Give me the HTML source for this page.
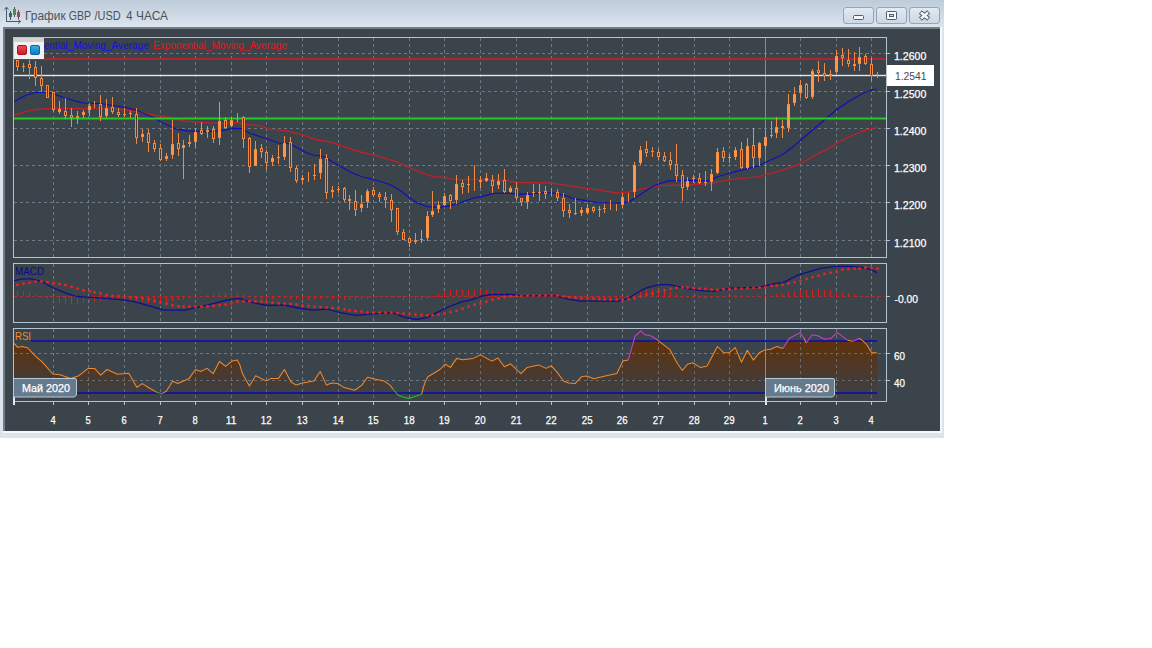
<!DOCTYPE html>
<html><head><meta charset="utf-8"><title>График GBP /USD 4 ЧАСА</title>
<style>html,body{margin:0;padding:0;background:#fff;}body{width:1152px;height:648px;position:relative;overflow:hidden;font-family:"Liberation Sans",sans-serif;}</style>
</head><body>
<svg width="944" height="438" viewBox="0 0 944 438" style="position:absolute;left:0;top:0">
<defs>
<linearGradient id="tb" gradientUnits="userSpaceOnUse" x1="0" y1="0" x2="0" y2="27"><stop offset="0" stop-color="#becbd9"/><stop offset="1" stop-color="#dbe5f0"/></linearGradient>
<linearGradient id="btn" x1="0" y1="0" x2="0" y2="1"><stop offset="0" stop-color="#e3ebf2"/><stop offset="0.5" stop-color="#d6e0ea"/><stop offset="1" stop-color="#ccd8e3"/></linearGradient>
<linearGradient id="rsig" gradientUnits="userSpaceOnUse" x1="0" y1="341" x2="0" y2="400"><stop offset="0" stop-color="#5f320b"/><stop offset="0.6" stop-color="#483a31"/><stop offset="1" stop-color="#3b434b"/></linearGradient>
<linearGradient id="rb" x1="0" y1="0" x2="0" y2="1"><stop offset="0" stop-color="#f05058"/><stop offset="1" stop-color="#c81828"/></linearGradient>
<linearGradient id="bb" x1="0" y1="0" x2="0" y2="1"><stop offset="0" stop-color="#38b0e8"/><stop offset="1" stop-color="#1078c0"/></linearGradient>
<linearGradient id="mb" x1="0" y1="0" x2="0" y2="1"><stop offset="0" stop-color="#5a6b7b"/><stop offset="1" stop-color="#7c8c9c"/></linearGradient>
<clipPath id="c3"><rect x="13" y="341" width="864" height="60"/></clipPath>
</defs>
<rect x="0" y="0" width="944" height="28" fill="url(#tb)"/>
<rect x="0" y="28" width="944" height="410" fill="#dbe4ed"/>
<rect x="940" y="27" width="2" height="406" fill="#f4f8fb"/>
<rect x="3" y="431" width="939" height="2" fill="#f6f9fc"/>
<rect x="3" y="27" width="937" height="404" fill="#747c84"/>
<rect x="5" y="29" width="935" height="402" fill="#3b434b"/>
<g fill="none" stroke="#4a5d72" stroke-width="1" shape-rendering="crispEdges">
<path d="M6.5 7.5V21.5H20.5"/>
</g>
<path d="M4.5 9.5L6.5 7L8.5 9.5M18 19.5L20.5 21.5L18 23.5" fill="none" stroke="#4a5d72" stroke-width="1"/>
<g shape-rendering="crispEdges"><rect x="10" y="11" width="1" height="9" fill="#3d5a4c"/><rect x="9" y="13" width="3" height="4" fill="#3f6650"/><rect x="14" y="7" width="1" height="10" fill="#3f6650"/><rect x="13" y="9" width="3" height="6" fill="#4f8560"/><rect x="18" y="10" width="1" height="9" fill="#7a4646"/><rect x="17" y="12" width="3" height="5" fill="#96504e"/></g>
<g font-family="Liberation Sans, sans-serif" font-size="12.3px" fill="#48525c">
<text x="25.0" y="20" textLength="40.6" lengthAdjust="spacingAndGlyphs">График</text>
<text x="68.8" y="20" textLength="22.2" lengthAdjust="spacingAndGlyphs">GBP</text>
<text x="94.5" y="20" textLength="26.2" lengthAdjust="spacingAndGlyphs">/USD</text>
<text x="126.2" y="20" textLength="6.2" lengthAdjust="spacingAndGlyphs">4</text>
<text x="136.0" y="20" textLength="32.0" lengthAdjust="spacingAndGlyphs">ЧАСА</text>
</g>
<rect x="843.5" y="7.5" width="30" height="16" rx="2.5" fill="url(#btn)" stroke="#93a5b8"/>
<rect x="876.5" y="7.5" width="30" height="16" rx="2.5" fill="url(#btn)" stroke="#93a5b8"/>
<rect x="909.5" y="7.5" width="30" height="16" rx="2.5" fill="url(#btn)" stroke="#93a5b8"/>
<rect x="853.5" y="15.5" width="10" height="4" rx="1" fill="#f6f8fb" stroke="#525c66"/>
<rect x="886.5" y="11.5" width="10" height="8" rx="0.8" fill="#f6f8fb" stroke="#525c66"/><rect x="889.5" y="14.5" width="4" height="2" fill="#d6e0ea" stroke="#525c66"/>
<path d="M920.3 12L928.7 19M928.7 12L920.3 19" stroke="#525c66" stroke-width="4.6" fill="none"/><path d="M920.9 12.5L928.1 18.5M928.1 12.5L920.9 18.5" stroke="#f6f8fb" stroke-width="2.5" fill="none"/>
<g stroke="#6c7883" stroke-width="1" stroke-dasharray="3 3" shape-rendering="crispEdges" fill="none">
<path d="M53.5 38V257"/>
<path d="M53.5 264V322"/>
<path d="M53.5 329V401"/>
<path d="M88.5 38V257"/>
<path d="M88.5 264V322"/>
<path d="M88.5 329V401"/>
<path d="M124.5 38V257"/>
<path d="M124.5 264V322"/>
<path d="M124.5 329V401"/>
<path d="M160.5 38V257"/>
<path d="M160.5 264V322"/>
<path d="M160.5 329V401"/>
<path d="M195.5 38V257"/>
<path d="M195.5 264V322"/>
<path d="M195.5 329V401"/>
<path d="M231.5 38V257"/>
<path d="M231.5 264V322"/>
<path d="M231.5 329V401"/>
<path d="M266.5 38V257"/>
<path d="M266.5 264V322"/>
<path d="M266.5 329V401"/>
<path d="M302.5 38V257"/>
<path d="M302.5 264V322"/>
<path d="M302.5 329V401"/>
<path d="M338.5 38V257"/>
<path d="M338.5 264V322"/>
<path d="M338.5 329V401"/>
<path d="M373.5 38V257"/>
<path d="M373.5 264V322"/>
<path d="M373.5 329V401"/>
<path d="M409.5 38V257"/>
<path d="M409.5 264V322"/>
<path d="M409.5 329V401"/>
<path d="M444.5 38V257"/>
<path d="M444.5 264V322"/>
<path d="M444.5 329V401"/>
<path d="M480.5 38V257"/>
<path d="M480.5 264V322"/>
<path d="M480.5 329V401"/>
<path d="M516.5 38V257"/>
<path d="M516.5 264V322"/>
<path d="M516.5 329V401"/>
<path d="M551.5 38V257"/>
<path d="M551.5 264V322"/>
<path d="M551.5 329V401"/>
<path d="M587.5 38V257"/>
<path d="M587.5 264V322"/>
<path d="M587.5 329V401"/>
<path d="M622.5 38V257"/>
<path d="M622.5 264V322"/>
<path d="M622.5 329V401"/>
<path d="M658.5 38V257"/>
<path d="M658.5 264V322"/>
<path d="M658.5 329V401"/>
<path d="M694.5 38V257"/>
<path d="M694.5 264V322"/>
<path d="M694.5 329V401"/>
<path d="M729.5 38V257"/>
<path d="M729.5 264V322"/>
<path d="M729.5 329V401"/>
<path d="M800.5 38V257"/>
<path d="M800.5 264V322"/>
<path d="M800.5 329V401"/>
<path d="M836.5 38V257"/>
<path d="M836.5 264V322"/>
<path d="M836.5 329V401"/>
<path d="M871.5 38V257"/>
<path d="M871.5 264V322"/>
<path d="M871.5 329V401"/>
<path d="M14 53.5H886"/>
<path d="M14 91.5H886"/>
<path d="M14 128.5H886"/>
<path d="M14 165.5H886"/>
<path d="M14 202.5H886"/>
<path d="M14 240.5H886"/>
<path d="M14 353.5H886"/>
<path d="M14 380.5H886"/>
</g>
<g stroke="#7f8e9c" shape-rendering="crispEdges"><path d="M765.5 38V257M765.5 264V322M765.5 329V401"/></g>
<rect x="14" y="38" width="275" height="15" fill="#3b434b"/>
<text x="15" y="49" font-family="Liberation Sans, sans-serif" font-size="10.5px" fill="#1212e2" textLength="134" lengthAdjust="spacingAndGlyphs">Exponential_Moving_Average</text>
<text x="153" y="49" font-family="Liberation Sans, sans-serif" font-size="10.5px" fill="#e01a1a" textLength="134" lengthAdjust="spacingAndGlyphs">Exponential_Moving_Average</text>
<polyline points="13.3,115.3 26.7,111.3 38.3,109.2 53.3,108.3 93.3,108.7 113.3,109.2 126.7,110.0 136.7,111.7 153.3,115.0 170.0,117.5 183.3,120.8 203.3,122.5 220.0,123.7 236.7,122.5 246.7,124.7 260.0,125.8 270.0,129.2 286.7,130.8 300.0,134.2 317.7,140.0 329.3,141.7 346.0,147.5 362.7,152.5 379.3,156.7 396.0,161.7 412.7,169.2 432.7,176.7 446.0,177.5 451.0,179.2 472.7,179.5 484.0,179.3 504.0,180.0 517.3,182.5 550.7,183.0 567.3,185.3 580.7,187.5 600.7,190.3 617.3,193.0 629.0,192.0 640.7,189.2 654.0,186.7 662.0,185.3 685.3,185.0 712.0,183.3 718.7,181.7 735.3,179.2 758.7,176.7 768.7,174.2 782.0,170.3 795.3,165.8 808.7,159.2 818.7,153.3 832.0,146.7 836.0,143.5 849.3,136.8 862.7,131.0 876.8,127.3" fill="none" stroke="#bc2228" stroke-width="1.35" stroke-linejoin="round" />
<polyline points="13.3,102.5 20.0,98.3 26.7,95.0 35.0,92.5 43.3,92.5 53.3,93.7 65.0,98.0 76.7,101.3 83.3,103.0 100.0,103.7 110.0,105.0 126.7,107.5 136.7,110.3 153.3,117.5 161.7,122.5 176.7,129.2 186.7,130.8 203.3,131.3 220.0,130.8 233.3,128.3 241.7,128.7 250.0,133.3 266.7,138.7 278.3,143.0 290.0,143.7 300.0,149.2 306.0,152.5 312.7,155.0 321.0,155.8 329.3,160.0 339.3,165.8 352.7,173.3 362.7,177.0 372.7,179.2 389.3,184.2 399.3,190.0 409.3,197.5 417.7,203.3 427.7,206.7 439.3,207.5 449.3,205.8 459.3,203.0 472.7,198.3 484.0,195.8 494.0,193.3 507.3,193.0 517.3,194.2 530.7,194.2 540.7,192.5 554.0,193.0 564.0,195.3 574.0,198.7 587.3,200.8 597.3,202.5 624.0,202.8 629.0,201.7 640.7,194.2 650.7,187.5 660.3,183.3 668.7,180.8 685.3,180.3 710.3,180.8 715.3,177.5 728.7,173.3 745.3,169.2 758.7,165.8 768.7,160.8 782.0,155.0 792.0,147.5 797.7,142.7 809.3,132.7 826.0,118.5 836.0,110.2 849.3,101.0 862.7,93.5 871.0,90.2 876.8,89.0" fill="none" stroke="#1010b8" stroke-width="1.2" stroke-linejoin="round" />
<rect x="14" y="58" width="872" height="2" fill="#b3232c"/>
<rect x="14" y="74.8" width="872" height="1.4" fill="#e4e7ea"/>
<rect x="14" y="117.5" width="872" height="2" fill="#22cc22"/>
<g shape-rendering="crispEdges">
<rect x="17" y="60" width="1" height="11" fill="#f08a46"/>
<rect x="16" y="60" width="3" height="7" fill="#f08a46"/>
<rect x="17" y="61" width="1" height="5" fill="#573527"/>
<rect x="23" y="63" width="1" height="9" fill="#f08a46"/>
<rect x="22" y="66" width="3" height="1" fill="#f08a46"/>
<rect x="29" y="60" width="1" height="19" fill="#f08a46"/>
<rect x="28" y="64" width="3" height="4" fill="#f08a46"/>
<rect x="29" y="65" width="1" height="2" fill="#573527"/>
<rect x="35" y="61" width="1" height="25" fill="#f08a46"/>
<rect x="34" y="67" width="3" height="11" fill="#f08a46"/>
<rect x="35" y="68" width="1" height="9" fill="#573527"/>
<rect x="41" y="66" width="1" height="26" fill="#f08a46"/>
<rect x="40" y="78" width="3" height="8" fill="#f08a46"/>
<rect x="41" y="79" width="1" height="6" fill="#573527"/>
<rect x="47" y="85" width="1" height="13" fill="#f08a46"/>
<rect x="46" y="85" width="3" height="13" fill="#f08a46"/>
<rect x="47" y="86" width="1" height="11" fill="#573527"/>
<rect x="53" y="92" width="1" height="20" fill="#f08a46"/>
<rect x="52" y="92" width="3" height="18" fill="#f08a46"/>
<rect x="53" y="93" width="1" height="16" fill="#573527"/>
<rect x="59" y="101" width="1" height="13" fill="#f08a46"/>
<rect x="58" y="109" width="3" height="3" fill="#f08a46"/>
<rect x="59" y="110" width="1" height="1" fill="#ff9848"/>
<rect x="58" y="110" width="3" height="1" fill="#ff9848" opacity="0.7"/>
<rect x="65" y="98" width="1" height="21" fill="#f08a46"/>
<rect x="64" y="111" width="3" height="5" fill="#f08a46"/>
<rect x="65" y="112" width="1" height="3" fill="#573527"/>
<rect x="71" y="108" width="1" height="19" fill="#f08a46"/>
<rect x="70" y="115" width="3" height="3" fill="#f08a46"/>
<rect x="71" y="116" width="1" height="1" fill="#573527"/>
<rect x="77" y="111" width="1" height="13" fill="#f08a46"/>
<rect x="76" y="116" width="3" height="2" fill="#f08a46"/>
<rect x="83" y="110" width="1" height="8" fill="#f08a46"/>
<rect x="82" y="112" width="3" height="3" fill="#f08a46"/>
<rect x="83" y="113" width="1" height="1" fill="#ff9848"/>
<rect x="82" y="113" width="3" height="1" fill="#ff9848" opacity="0.7"/>
<rect x="89" y="103" width="1" height="13" fill="#f08a46"/>
<rect x="88" y="106" width="3" height="4" fill="#f08a46"/>
<rect x="89" y="107" width="1" height="2" fill="#ff9848"/>
<rect x="88" y="107" width="3" height="2" fill="#ff9848" opacity="0.7"/>
<rect x="94" y="101" width="1" height="7" fill="#f08a46"/>
<rect x="100" y="95" width="1" height="26" fill="#f08a46"/>
<rect x="99" y="104" width="3" height="13" fill="#f08a46"/>
<rect x="100" y="105" width="1" height="11" fill="#573527"/>
<rect x="106" y="99" width="1" height="19" fill="#f08a46"/>
<rect x="105" y="108" width="3" height="8" fill="#f08a46"/>
<rect x="106" y="109" width="1" height="6" fill="#ff9848"/>
<rect x="105" y="109" width="3" height="6" fill="#ff9848" opacity="0.7"/>
<rect x="112" y="97" width="1" height="17" fill="#f08a46"/>
<rect x="111" y="107" width="3" height="5" fill="#f08a46"/>
<rect x="112" y="108" width="1" height="3" fill="#573527"/>
<rect x="118" y="108" width="1" height="9" fill="#f08a46"/>
<rect x="117" y="112" width="3" height="3" fill="#f08a46"/>
<rect x="118" y="113" width="1" height="1" fill="#573527"/>
<rect x="124" y="108" width="1" height="9" fill="#f08a46"/>
<rect x="123" y="114" width="3" height="1" fill="#f08a46"/>
<rect x="130" y="111" width="1" height="7" fill="#f08a46"/>
<rect x="129" y="113" width="3" height="1" fill="#f08a46"/>
<rect x="136" y="108" width="1" height="36" fill="#f08a46"/>
<rect x="135" y="114" width="3" height="24" fill="#f08a46"/>
<rect x="136" y="115" width="1" height="22" fill="#573527"/>
<rect x="142" y="129" width="1" height="13" fill="#f08a46"/>
<rect x="141" y="134" width="3" height="3" fill="#f08a46"/>
<rect x="142" y="135" width="1" height="1" fill="#ff9848"/>
<rect x="141" y="135" width="3" height="1" fill="#ff9848" opacity="0.7"/>
<rect x="148" y="129" width="1" height="23" fill="#f08a46"/>
<rect x="147" y="133" width="3" height="10" fill="#f08a46"/>
<rect x="148" y="134" width="1" height="8" fill="#573527"/>
<rect x="154" y="140" width="1" height="12" fill="#f08a46"/>
<rect x="153" y="143" width="3" height="6" fill="#f08a46"/>
<rect x="154" y="144" width="1" height="4" fill="#573527"/>
<rect x="160" y="144" width="1" height="17" fill="#f08a46"/>
<rect x="159" y="148" width="3" height="12" fill="#f08a46"/>
<rect x="160" y="149" width="1" height="10" fill="#573527"/>
<rect x="166" y="153" width="1" height="8" fill="#f08a46"/>
<rect x="165" y="156" width="3" height="3" fill="#f08a46"/>
<rect x="166" y="157" width="1" height="1" fill="#ff9848"/>
<rect x="165" y="157" width="3" height="1" fill="#ff9848" opacity="0.7"/>
<rect x="172" y="120" width="1" height="39" fill="#f08a46"/>
<rect x="171" y="144" width="3" height="11" fill="#f08a46"/>
<rect x="172" y="145" width="1" height="9" fill="#ff9848"/>
<rect x="171" y="145" width="3" height="9" fill="#ff9848" opacity="0.7"/>
<rect x="178" y="133" width="1" height="23" fill="#f08a46"/>
<rect x="177" y="143" width="3" height="6" fill="#f08a46"/>
<rect x="178" y="144" width="1" height="4" fill="#573527"/>
<rect x="183" y="140" width="1" height="39" fill="#f08a46"/>
<rect x="182" y="145" width="3" height="3" fill="#f08a46"/>
<rect x="183" y="146" width="1" height="1" fill="#ff9848"/>
<rect x="182" y="146" width="3" height="1" fill="#ff9848" opacity="0.7"/>
<rect x="189" y="135" width="1" height="12" fill="#f08a46"/>
<rect x="188" y="142" width="3" height="2" fill="#f08a46"/>
<rect x="195" y="128" width="1" height="20" fill="#f08a46"/>
<rect x="194" y="132" width="3" height="10" fill="#f08a46"/>
<rect x="195" y="133" width="1" height="8" fill="#ff9848"/>
<rect x="194" y="133" width="3" height="8" fill="#ff9848" opacity="0.7"/>
<rect x="201" y="122" width="1" height="13" fill="#f08a46"/>
<rect x="200" y="130" width="3" height="4" fill="#f08a46"/>
<rect x="201" y="131" width="1" height="2" fill="#573527"/>
<rect x="207" y="126" width="1" height="12" fill="#f08a46"/>
<rect x="206" y="130" width="3" height="2" fill="#f08a46"/>
<rect x="213" y="126" width="1" height="17" fill="#f08a46"/>
<rect x="212" y="129" width="3" height="10" fill="#f08a46"/>
<rect x="213" y="130" width="1" height="8" fill="#573527"/>
<rect x="219" y="102" width="1" height="43" fill="#f08a46"/>
<rect x="218" y="121" width="3" height="17" fill="#f08a46"/>
<rect x="219" y="122" width="1" height="15" fill="#ff9848"/>
<rect x="218" y="122" width="3" height="15" fill="#ff9848" opacity="0.7"/>
<rect x="225" y="117" width="1" height="11" fill="#f08a46"/>
<rect x="224" y="120" width="3" height="8" fill="#f08a46"/>
<rect x="225" y="121" width="1" height="6" fill="#573527"/>
<rect x="231" y="117" width="1" height="10" fill="#f08a46"/>
<rect x="230" y="120" width="3" height="6" fill="#f08a46"/>
<rect x="231" y="121" width="1" height="4" fill="#ff9848"/>
<rect x="230" y="121" width="3" height="4" fill="#ff9848" opacity="0.7"/>
<rect x="237" y="113" width="1" height="9" fill="#f08a46"/>
<rect x="243" y="116" width="1" height="32" fill="#f08a46"/>
<rect x="242" y="117" width="3" height="22" fill="#f08a46"/>
<rect x="243" y="118" width="1" height="20" fill="#573527"/>
<rect x="249" y="137" width="1" height="36" fill="#f08a46"/>
<rect x="248" y="138" width="3" height="29" fill="#f08a46"/>
<rect x="249" y="139" width="1" height="27" fill="#573527"/>
<rect x="255" y="141" width="1" height="25" fill="#f08a46"/>
<rect x="254" y="149" width="3" height="17" fill="#f08a46"/>
<rect x="255" y="150" width="1" height="15" fill="#ff9848"/>
<rect x="254" y="150" width="3" height="15" fill="#ff9848" opacity="0.7"/>
<rect x="261" y="144" width="1" height="14" fill="#f08a46"/>
<rect x="260" y="148" width="3" height="4" fill="#f08a46"/>
<rect x="261" y="149" width="1" height="2" fill="#573527"/>
<rect x="266" y="150" width="1" height="20" fill="#f08a46"/>
<rect x="265" y="152" width="3" height="11" fill="#f08a46"/>
<rect x="266" y="153" width="1" height="9" fill="#573527"/>
<rect x="272" y="155" width="1" height="11" fill="#f08a46"/>
<rect x="271" y="158" width="3" height="4" fill="#f08a46"/>
<rect x="272" y="159" width="1" height="2" fill="#ff9848"/>
<rect x="271" y="159" width="3" height="2" fill="#ff9848" opacity="0.7"/>
<rect x="278" y="145" width="1" height="19" fill="#f08a46"/>
<rect x="277" y="157" width="3" height="1" fill="#f08a46"/>
<rect x="284" y="136" width="1" height="24" fill="#f08a46"/>
<rect x="283" y="143" width="3" height="14" fill="#f08a46"/>
<rect x="284" y="144" width="1" height="12" fill="#ff9848"/>
<rect x="283" y="144" width="3" height="12" fill="#ff9848" opacity="0.7"/>
<rect x="290" y="137" width="1" height="35" fill="#f08a46"/>
<rect x="289" y="142" width="3" height="26" fill="#f08a46"/>
<rect x="290" y="143" width="1" height="24" fill="#573527"/>
<rect x="296" y="166" width="1" height="17" fill="#f08a46"/>
<rect x="295" y="168" width="3" height="13" fill="#f08a46"/>
<rect x="296" y="169" width="1" height="11" fill="#573527"/>
<rect x="302" y="175" width="1" height="9" fill="#f08a46"/>
<rect x="301" y="178" width="3" height="2" fill="#f08a46"/>
<rect x="308" y="172" width="1" height="10" fill="#f08a46"/>
<rect x="314" y="164" width="1" height="16" fill="#f08a46"/>
<rect x="313" y="175" width="3" height="1" fill="#f08a46"/>
<rect x="320" y="149" width="1" height="30" fill="#f08a46"/>
<rect x="319" y="159" width="3" height="14" fill="#f08a46"/>
<rect x="320" y="160" width="1" height="12" fill="#ff9848"/>
<rect x="319" y="160" width="3" height="12" fill="#ff9848" opacity="0.7"/>
<rect x="326" y="154" width="1" height="45" fill="#f08a46"/>
<rect x="325" y="158" width="3" height="35" fill="#f08a46"/>
<rect x="326" y="159" width="1" height="33" fill="#573527"/>
<rect x="332" y="186" width="1" height="12" fill="#f08a46"/>
<rect x="331" y="190" width="3" height="2" fill="#f08a46"/>
<rect x="338" y="186" width="1" height="7" fill="#f08a46"/>
<rect x="337" y="189" width="3" height="1" fill="#f08a46"/>
<rect x="344" y="187" width="1" height="15" fill="#f08a46"/>
<rect x="343" y="188" width="3" height="12" fill="#f08a46"/>
<rect x="344" y="189" width="1" height="10" fill="#573527"/>
<rect x="349" y="195" width="1" height="15" fill="#f08a46"/>
<rect x="348" y="199" width="3" height="2" fill="#f08a46"/>
<rect x="355" y="190" width="1" height="26" fill="#f08a46"/>
<rect x="354" y="201" width="3" height="9" fill="#f08a46"/>
<rect x="355" y="202" width="1" height="7" fill="#573527"/>
<rect x="361" y="195" width="1" height="17" fill="#f08a46"/>
<rect x="360" y="204" width="3" height="4" fill="#f08a46"/>
<rect x="361" y="205" width="1" height="2" fill="#ff9848"/>
<rect x="360" y="205" width="3" height="2" fill="#ff9848" opacity="0.7"/>
<rect x="367" y="189" width="1" height="19" fill="#f08a46"/>
<rect x="366" y="191" width="3" height="11" fill="#f08a46"/>
<rect x="367" y="192" width="1" height="9" fill="#ff9848"/>
<rect x="366" y="192" width="3" height="9" fill="#ff9848" opacity="0.7"/>
<rect x="373" y="187" width="1" height="10" fill="#f08a46"/>
<rect x="372" y="190" width="3" height="5" fill="#f08a46"/>
<rect x="373" y="191" width="1" height="3" fill="#573527"/>
<rect x="379" y="192" width="1" height="10" fill="#f08a46"/>
<rect x="378" y="194" width="3" height="3" fill="#f08a46"/>
<rect x="379" y="195" width="1" height="1" fill="#573527"/>
<rect x="385" y="192" width="1" height="16" fill="#f08a46"/>
<rect x="384" y="197" width="3" height="3" fill="#f08a46"/>
<rect x="385" y="198" width="1" height="1" fill="#573527"/>
<rect x="391" y="194" width="1" height="28" fill="#f08a46"/>
<rect x="390" y="200" width="3" height="10" fill="#f08a46"/>
<rect x="391" y="201" width="1" height="8" fill="#573527"/>
<rect x="397" y="208" width="1" height="27" fill="#f08a46"/>
<rect x="396" y="208" width="3" height="24" fill="#f08a46"/>
<rect x="397" y="209" width="1" height="22" fill="#573527"/>
<rect x="403" y="229" width="1" height="11" fill="#f08a46"/>
<rect x="402" y="232" width="3" height="8" fill="#f08a46"/>
<rect x="403" y="233" width="1" height="6" fill="#573527"/>
<rect x="409" y="238" width="1" height="9" fill="#f08a46"/>
<rect x="408" y="238" width="3" height="5" fill="#f08a46"/>
<rect x="409" y="239" width="1" height="3" fill="#573527"/>
<rect x="415" y="233" width="1" height="11" fill="#f08a46"/>
<rect x="414" y="240" width="3" height="2" fill="#f08a46"/>
<rect x="421" y="230" width="1" height="13" fill="#f08a46"/>
<rect x="420" y="239" width="3" height="1" fill="#f08a46"/>
<rect x="427" y="211" width="1" height="30" fill="#f08a46"/>
<rect x="426" y="216" width="3" height="22" fill="#f08a46"/>
<rect x="427" y="217" width="1" height="20" fill="#ff9848"/>
<rect x="426" y="217" width="3" height="20" fill="#ff9848" opacity="0.7"/>
<rect x="432" y="191" width="1" height="26" fill="#f08a46"/>
<rect x="431" y="211" width="3" height="4" fill="#f08a46"/>
<rect x="432" y="212" width="1" height="2" fill="#ff9848"/>
<rect x="431" y="212" width="3" height="2" fill="#ff9848" opacity="0.7"/>
<rect x="438" y="201" width="1" height="12" fill="#f08a46"/>
<rect x="437" y="205" width="3" height="4" fill="#f08a46"/>
<rect x="438" y="206" width="1" height="2" fill="#ff9848"/>
<rect x="437" y="206" width="3" height="2" fill="#ff9848" opacity="0.7"/>
<rect x="444" y="193" width="1" height="13" fill="#f08a46"/>
<rect x="443" y="196" width="3" height="9" fill="#f08a46"/>
<rect x="444" y="197" width="1" height="7" fill="#ff9848"/>
<rect x="443" y="197" width="3" height="7" fill="#ff9848" opacity="0.7"/>
<rect x="450" y="194" width="1" height="15" fill="#f08a46"/>
<rect x="449" y="195" width="3" height="6" fill="#f08a46"/>
<rect x="450" y="196" width="1" height="4" fill="#573527"/>
<rect x="456" y="175" width="1" height="29" fill="#f08a46"/>
<rect x="455" y="184" width="3" height="16" fill="#f08a46"/>
<rect x="456" y="185" width="1" height="14" fill="#ff9848"/>
<rect x="455" y="185" width="3" height="14" fill="#ff9848" opacity="0.7"/>
<rect x="462" y="180" width="1" height="14" fill="#f08a46"/>
<rect x="461" y="183" width="3" height="4" fill="#f08a46"/>
<rect x="462" y="184" width="1" height="2" fill="#573527"/>
<rect x="468" y="176" width="1" height="17" fill="#f08a46"/>
<rect x="467" y="184" width="3" height="1" fill="#f08a46"/>
<rect x="474" y="165" width="1" height="26" fill="#f08a46"/>
<rect x="480" y="176" width="1" height="12" fill="#f08a46"/>
<rect x="479" y="180" width="3" height="2" fill="#f08a46"/>
<rect x="486" y="173" width="1" height="9" fill="#f08a46"/>
<rect x="485" y="178" width="3" height="3" fill="#f08a46"/>
<rect x="486" y="179" width="1" height="1" fill="#ff9848"/>
<rect x="485" y="179" width="3" height="1" fill="#ff9848" opacity="0.7"/>
<rect x="492" y="175" width="1" height="18" fill="#f08a46"/>
<rect x="491" y="180" width="3" height="6" fill="#f08a46"/>
<rect x="492" y="181" width="1" height="4" fill="#573527"/>
<rect x="498" y="174" width="1" height="15" fill="#f08a46"/>
<rect x="497" y="181" width="3" height="4" fill="#f08a46"/>
<rect x="498" y="182" width="1" height="2" fill="#ff9848"/>
<rect x="497" y="182" width="3" height="2" fill="#ff9848" opacity="0.7"/>
<rect x="504" y="169" width="1" height="24" fill="#f08a46"/>
<rect x="503" y="180" width="3" height="12" fill="#f08a46"/>
<rect x="504" y="181" width="1" height="10" fill="#573527"/>
<rect x="510" y="186" width="1" height="7" fill="#f08a46"/>
<rect x="509" y="188" width="3" height="4" fill="#f08a46"/>
<rect x="510" y="189" width="1" height="2" fill="#ff9848"/>
<rect x="509" y="189" width="3" height="2" fill="#ff9848" opacity="0.7"/>
<rect x="516" y="182" width="1" height="18" fill="#f08a46"/>
<rect x="515" y="188" width="3" height="10" fill="#f08a46"/>
<rect x="516" y="189" width="1" height="8" fill="#573527"/>
<rect x="521" y="198" width="1" height="8" fill="#f08a46"/>
<rect x="520" y="198" width="3" height="4" fill="#f08a46"/>
<rect x="521" y="199" width="1" height="2" fill="#573527"/>
<rect x="527" y="192" width="1" height="17" fill="#f08a46"/>
<rect x="526" y="195" width="3" height="7" fill="#f08a46"/>
<rect x="527" y="196" width="1" height="5" fill="#ff9848"/>
<rect x="526" y="196" width="3" height="5" fill="#ff9848" opacity="0.7"/>
<rect x="533" y="184" width="1" height="13" fill="#f08a46"/>
<rect x="532" y="192" width="3" height="1" fill="#f08a46"/>
<rect x="539" y="184" width="1" height="17" fill="#f08a46"/>
<rect x="538" y="192" width="3" height="1" fill="#f08a46"/>
<rect x="545" y="186" width="1" height="13" fill="#f08a46"/>
<rect x="544" y="191" width="3" height="3" fill="#f08a46"/>
<rect x="545" y="192" width="1" height="1" fill="#573527"/>
<rect x="551" y="188" width="1" height="8" fill="#f08a46"/>
<rect x="557" y="189" width="1" height="12" fill="#f08a46"/>
<rect x="556" y="192" width="3" height="6" fill="#f08a46"/>
<rect x="557" y="193" width="1" height="4" fill="#573527"/>
<rect x="563" y="193" width="1" height="24" fill="#f08a46"/>
<rect x="562" y="198" width="3" height="13" fill="#f08a46"/>
<rect x="563" y="199" width="1" height="11" fill="#573527"/>
<rect x="569" y="204" width="1" height="14" fill="#f08a46"/>
<rect x="568" y="210" width="3" height="3" fill="#f08a46"/>
<rect x="569" y="211" width="1" height="1" fill="#573527"/>
<rect x="575" y="198" width="1" height="17" fill="#f08a46"/>
<rect x="574" y="213" width="3" height="1" fill="#f08a46"/>
<rect x="581" y="207" width="1" height="9" fill="#f08a46"/>
<rect x="580" y="210" width="3" height="3" fill="#f08a46"/>
<rect x="581" y="211" width="1" height="1" fill="#ff9848"/>
<rect x="580" y="211" width="3" height="1" fill="#ff9848" opacity="0.7"/>
<rect x="587" y="204" width="1" height="10" fill="#f08a46"/>
<rect x="586" y="208" width="3" height="5" fill="#f08a46"/>
<rect x="587" y="209" width="1" height="3" fill="#ff9848"/>
<rect x="586" y="209" width="3" height="3" fill="#ff9848" opacity="0.7"/>
<rect x="593" y="206" width="1" height="7" fill="#f08a46"/>
<rect x="592" y="207" width="3" height="4" fill="#f08a46"/>
<rect x="593" y="208" width="1" height="2" fill="#573527"/>
<rect x="599" y="206" width="1" height="11" fill="#f08a46"/>
<rect x="598" y="209" width="3" height="1" fill="#f08a46"/>
<rect x="604" y="204" width="1" height="9" fill="#f08a46"/>
<rect x="603" y="208" width="3" height="1" fill="#f08a46"/>
<rect x="610" y="200" width="1" height="10" fill="#f08a46"/>
<rect x="616" y="204" width="1" height="7" fill="#f08a46"/>
<rect x="622" y="193" width="1" height="15" fill="#f08a46"/>
<rect x="621" y="197" width="3" height="8" fill="#f08a46"/>
<rect x="622" y="198" width="1" height="6" fill="#ff9848"/>
<rect x="621" y="198" width="3" height="6" fill="#ff9848" opacity="0.7"/>
<rect x="628" y="193" width="1" height="9" fill="#f08a46"/>
<rect x="634" y="162" width="1" height="36" fill="#f08a46"/>
<rect x="633" y="165" width="3" height="27" fill="#f08a46"/>
<rect x="634" y="166" width="1" height="25" fill="#ff9848"/>
<rect x="633" y="166" width="3" height="25" fill="#ff9848" opacity="0.7"/>
<rect x="640" y="146" width="1" height="19" fill="#f08a46"/>
<rect x="639" y="150" width="3" height="13" fill="#f08a46"/>
<rect x="640" y="151" width="1" height="11" fill="#ff9848"/>
<rect x="639" y="151" width="3" height="11" fill="#ff9848" opacity="0.7"/>
<rect x="646" y="141" width="1" height="16" fill="#f08a46"/>
<rect x="645" y="149" width="3" height="4" fill="#f08a46"/>
<rect x="646" y="150" width="1" height="2" fill="#573527"/>
<rect x="652" y="147" width="1" height="10" fill="#f08a46"/>
<rect x="651" y="151" width="3" height="1" fill="#f08a46"/>
<rect x="658" y="149" width="1" height="11" fill="#f08a46"/>
<rect x="657" y="152" width="3" height="5" fill="#f08a46"/>
<rect x="658" y="153" width="1" height="3" fill="#573527"/>
<rect x="664" y="152" width="1" height="10" fill="#f08a46"/>
<rect x="663" y="156" width="3" height="5" fill="#f08a46"/>
<rect x="664" y="157" width="1" height="3" fill="#573527"/>
<rect x="670" y="152" width="1" height="18" fill="#f08a46"/>
<rect x="669" y="160" width="3" height="5" fill="#f08a46"/>
<rect x="670" y="161" width="1" height="3" fill="#573527"/>
<rect x="676" y="144" width="1" height="38" fill="#f08a46"/>
<rect x="675" y="164" width="3" height="12" fill="#f08a46"/>
<rect x="676" y="165" width="1" height="10" fill="#573527"/>
<rect x="682" y="170" width="1" height="31" fill="#f08a46"/>
<rect x="681" y="175" width="3" height="13" fill="#f08a46"/>
<rect x="682" y="176" width="1" height="11" fill="#573527"/>
<rect x="687" y="177" width="1" height="13" fill="#f08a46"/>
<rect x="686" y="181" width="3" height="6" fill="#f08a46"/>
<rect x="687" y="182" width="1" height="4" fill="#ff9848"/>
<rect x="686" y="182" width="3" height="4" fill="#ff9848" opacity="0.7"/>
<rect x="693" y="175" width="1" height="8" fill="#f08a46"/>
<rect x="692" y="178" width="3" height="1" fill="#f08a46"/>
<rect x="699" y="173" width="1" height="11" fill="#f08a46"/>
<rect x="698" y="178" width="3" height="5" fill="#f08a46"/>
<rect x="699" y="179" width="1" height="3" fill="#573527"/>
<rect x="705" y="171" width="1" height="15" fill="#f08a46"/>
<rect x="704" y="182" width="3" height="1" fill="#f08a46"/>
<rect x="711" y="169" width="1" height="22" fill="#f08a46"/>
<rect x="710" y="174" width="3" height="8" fill="#f08a46"/>
<rect x="711" y="175" width="1" height="6" fill="#ff9848"/>
<rect x="710" y="175" width="3" height="6" fill="#ff9848" opacity="0.7"/>
<rect x="717" y="148" width="1" height="26" fill="#f08a46"/>
<rect x="716" y="152" width="3" height="21" fill="#f08a46"/>
<rect x="717" y="153" width="1" height="19" fill="#ff9848"/>
<rect x="716" y="153" width="3" height="19" fill="#ff9848" opacity="0.7"/>
<rect x="723" y="147" width="1" height="15" fill="#f08a46"/>
<rect x="722" y="151" width="3" height="7" fill="#f08a46"/>
<rect x="723" y="152" width="1" height="5" fill="#573527"/>
<rect x="729" y="154" width="1" height="9" fill="#f08a46"/>
<rect x="728" y="157" width="3" height="1" fill="#f08a46"/>
<rect x="735" y="147" width="1" height="13" fill="#f08a46"/>
<rect x="734" y="150" width="3" height="7" fill="#f08a46"/>
<rect x="735" y="151" width="1" height="5" fill="#ff9848"/>
<rect x="734" y="151" width="3" height="5" fill="#ff9848" opacity="0.7"/>
<rect x="741" y="142" width="1" height="27" fill="#f08a46"/>
<rect x="740" y="149" width="3" height="19" fill="#f08a46"/>
<rect x="741" y="150" width="1" height="17" fill="#573527"/>
<rect x="747" y="138" width="1" height="31" fill="#f08a46"/>
<rect x="746" y="146" width="3" height="22" fill="#f08a46"/>
<rect x="747" y="147" width="1" height="20" fill="#ff9848"/>
<rect x="746" y="147" width="3" height="20" fill="#ff9848" opacity="0.7"/>
<rect x="753" y="128" width="1" height="40" fill="#f08a46"/>
<rect x="752" y="145" width="3" height="13" fill="#f08a46"/>
<rect x="753" y="146" width="1" height="11" fill="#573527"/>
<rect x="759" y="142" width="1" height="24" fill="#f08a46"/>
<rect x="758" y="143" width="3" height="15" fill="#f08a46"/>
<rect x="759" y="144" width="1" height="13" fill="#ff9848"/>
<rect x="758" y="144" width="3" height="13" fill="#ff9848" opacity="0.7"/>
<rect x="765" y="130" width="1" height="19" fill="#f08a46"/>
<rect x="764" y="137" width="3" height="9" fill="#f08a46"/>
<rect x="765" y="138" width="1" height="7" fill="#ff9848"/>
<rect x="764" y="138" width="3" height="7" fill="#ff9848" opacity="0.7"/>
<rect x="771" y="121" width="1" height="17" fill="#f08a46"/>
<rect x="770" y="135" width="3" height="1" fill="#f08a46"/>
<rect x="776" y="117" width="1" height="21" fill="#f08a46"/>
<rect x="775" y="127" width="3" height="6" fill="#f08a46"/>
<rect x="776" y="128" width="1" height="4" fill="#ff9848"/>
<rect x="775" y="128" width="3" height="4" fill="#ff9848" opacity="0.7"/>
<rect x="782" y="120" width="1" height="18" fill="#f08a46"/>
<rect x="781" y="126" width="3" height="2" fill="#f08a46"/>
<rect x="788" y="94" width="1" height="38" fill="#f08a46"/>
<rect x="787" y="104" width="3" height="24" fill="#f08a46"/>
<rect x="788" y="105" width="1" height="22" fill="#ff9848"/>
<rect x="787" y="105" width="3" height="22" fill="#ff9848" opacity="0.7"/>
<rect x="794" y="87" width="1" height="19" fill="#f08a46"/>
<rect x="793" y="94" width="3" height="9" fill="#f08a46"/>
<rect x="794" y="95" width="1" height="7" fill="#ff9848"/>
<rect x="793" y="95" width="3" height="7" fill="#ff9848" opacity="0.7"/>
<rect x="800" y="80" width="1" height="18" fill="#f08a46"/>
<rect x="799" y="85" width="3" height="8" fill="#f08a46"/>
<rect x="800" y="86" width="1" height="6" fill="#ff9848"/>
<rect x="799" y="86" width="3" height="6" fill="#ff9848" opacity="0.7"/>
<rect x="806" y="83" width="1" height="16" fill="#f08a46"/>
<rect x="805" y="84" width="3" height="14" fill="#f08a46"/>
<rect x="806" y="85" width="1" height="12" fill="#573527"/>
<rect x="812" y="69" width="1" height="30" fill="#f08a46"/>
<rect x="811" y="71" width="3" height="26" fill="#f08a46"/>
<rect x="812" y="72" width="1" height="24" fill="#ff9848"/>
<rect x="811" y="72" width="3" height="24" fill="#ff9848" opacity="0.7"/>
<rect x="818" y="61" width="1" height="21" fill="#f08a46"/>
<rect x="817" y="70" width="3" height="3" fill="#f08a46"/>
<rect x="818" y="71" width="1" height="1" fill="#573527"/>
<rect x="824" y="63" width="1" height="18" fill="#f08a46"/>
<rect x="823" y="73" width="3" height="3" fill="#f08a46"/>
<rect x="824" y="74" width="1" height="1" fill="#573527"/>
<rect x="830" y="70" width="1" height="10" fill="#f08a46"/>
<rect x="829" y="74" width="3" height="2" fill="#f08a46"/>
<rect x="836" y="50" width="1" height="24" fill="#f08a46"/>
<rect x="835" y="56" width="3" height="16" fill="#f08a46"/>
<rect x="836" y="57" width="1" height="14" fill="#ff9848"/>
<rect x="835" y="57" width="3" height="14" fill="#ff9848" opacity="0.7"/>
<rect x="842" y="48" width="1" height="18" fill="#f08a46"/>
<rect x="841" y="55" width="3" height="3" fill="#f08a46"/>
<rect x="842" y="56" width="1" height="1" fill="#573527"/>
<rect x="848" y="49" width="1" height="18" fill="#f08a46"/>
<rect x="847" y="60" width="3" height="4" fill="#f08a46"/>
<rect x="848" y="61" width="1" height="2" fill="#573527"/>
<rect x="854" y="52" width="1" height="19" fill="#f08a46"/>
<rect x="853" y="64" width="3" height="2" fill="#f08a46"/>
<rect x="859" y="47" width="1" height="24" fill="#f08a46"/>
<rect x="858" y="57" width="3" height="7" fill="#f08a46"/>
<rect x="859" y="58" width="1" height="5" fill="#ff9848"/>
<rect x="858" y="58" width="3" height="5" fill="#ff9848" opacity="0.7"/>
<rect x="865" y="54" width="1" height="11" fill="#f08a46"/>
<rect x="864" y="56" width="3" height="8" fill="#f08a46"/>
<rect x="865" y="57" width="1" height="6" fill="#573527"/>
<rect x="871" y="58" width="1" height="23" fill="#f08a46"/>
<rect x="870" y="64" width="3" height="12" fill="#f08a46"/>
<rect x="871" y="65" width="1" height="10" fill="#573527"/>
<rect x="877" y="72" width="1" height="6" fill="#f08a46"/>
</g>
<g shape-rendering="crispEdges"><rect x="13" y="37" width="31" height="22" fill="#f1f1f1"/><rect x="13" y="37" width="31" height="5" fill="#d2d2d2"/></g>
<rect x="17.5" y="45.5" width="9" height="9" rx="1.5" fill="url(#rb)" stroke="#b01020"/>
<rect x="30.5" y="45.5" width="9" height="9" rx="1.5" fill="url(#bb)" stroke="#0868a8"/>
<g font-family="Liberation Sans, sans-serif" font-size="10.6px" fill="#ffffff" stroke="#ffffff" stroke-width="0.25">
<text x="894" y="59.8" textLength="32.3" lengthAdjust="spacingAndGlyphs">1.2600</text>
<text x="894" y="97.8" textLength="32.3" lengthAdjust="spacingAndGlyphs">1.2500</text>
<text x="894" y="134.8" textLength="32.3" lengthAdjust="spacingAndGlyphs">1.2400</text>
<text x="894" y="171.8" textLength="32.3" lengthAdjust="spacingAndGlyphs">1.2300</text>
<text x="894" y="208.8" textLength="32.3" lengthAdjust="spacingAndGlyphs">1.2200</text>
<text x="894" y="246.8" textLength="32.3" lengthAdjust="spacingAndGlyphs">1.2100</text>
<text x="894.5" y="303" textLength="23.5" lengthAdjust="spacingAndGlyphs">-0.00</text>
<text x="894" y="359.8" textLength="11" lengthAdjust="spacingAndGlyphs">60</text>
<text x="894" y="386.8" textLength="11" lengthAdjust="spacingAndGlyphs">40</text>
<text x="50.6" y="424" textLength="5.2" lengthAdjust="spacingAndGlyphs">4</text>
<text x="85.6" y="424" textLength="5.2" lengthAdjust="spacingAndGlyphs">5</text>
<text x="121.6" y="424" textLength="5.2" lengthAdjust="spacingAndGlyphs">6</text>
<text x="157.6" y="424" textLength="5.2" lengthAdjust="spacingAndGlyphs">7</text>
<text x="192.6" y="424" textLength="5.2" lengthAdjust="spacingAndGlyphs">8</text>
<text x="225.8" y="424" textLength="10.8" lengthAdjust="spacingAndGlyphs">11</text>
<text x="260.8" y="424" textLength="10.8" lengthAdjust="spacingAndGlyphs">12</text>
<text x="296.8" y="424" textLength="10.8" lengthAdjust="spacingAndGlyphs">13</text>
<text x="332.8" y="424" textLength="10.8" lengthAdjust="spacingAndGlyphs">14</text>
<text x="367.8" y="424" textLength="10.8" lengthAdjust="spacingAndGlyphs">15</text>
<text x="403.8" y="424" textLength="10.8" lengthAdjust="spacingAndGlyphs">18</text>
<text x="438.8" y="424" textLength="10.8" lengthAdjust="spacingAndGlyphs">19</text>
<text x="474.8" y="424" textLength="10.8" lengthAdjust="spacingAndGlyphs">20</text>
<text x="510.8" y="424" textLength="10.8" lengthAdjust="spacingAndGlyphs">21</text>
<text x="545.8" y="424" textLength="10.8" lengthAdjust="spacingAndGlyphs">22</text>
<text x="581.8" y="424" textLength="10.8" lengthAdjust="spacingAndGlyphs">25</text>
<text x="616.8" y="424" textLength="10.8" lengthAdjust="spacingAndGlyphs">26</text>
<text x="652.8" y="424" textLength="10.8" lengthAdjust="spacingAndGlyphs">27</text>
<text x="688.8" y="424" textLength="10.8" lengthAdjust="spacingAndGlyphs">28</text>
<text x="723.8" y="424" textLength="10.8" lengthAdjust="spacingAndGlyphs">29</text>
<text x="762.6" y="424" textLength="5.2" lengthAdjust="spacingAndGlyphs">1</text>
<text x="797.6" y="424" textLength="5.2" lengthAdjust="spacingAndGlyphs">2</text>
<text x="833.6" y="424" textLength="5.2" lengthAdjust="spacingAndGlyphs">3</text>
<text x="868.6" y="424" textLength="5.2" lengthAdjust="spacingAndGlyphs">4</text>
</g>
<g stroke="#b2c4d4" shape-rendering="crispEdges">
<path d="M887 53.5H890"/>
<path d="M887 91.5H890"/>
<path d="M887 128.5H890"/>
<path d="M887 165.5H890"/>
<path d="M887 202.5H890"/>
<path d="M887 240.5H890"/>
<path d="M887 296.5H890"/>
<path d="M887 353.5H890"/>
<path d="M887 380.5H890"/>
<path d="M53.5 402V405"/>
<path d="M88.5 402V405"/>
<path d="M124.5 402V405"/>
<path d="M160.5 402V405"/>
<path d="M195.5 402V405"/>
<path d="M231.5 402V405"/>
<path d="M266.5 402V405"/>
<path d="M302.5 402V405"/>
<path d="M338.5 402V405"/>
<path d="M373.5 402V405"/>
<path d="M409.5 402V405"/>
<path d="M444.5 402V405"/>
<path d="M480.5 402V405"/>
<path d="M516.5 402V405"/>
<path d="M551.5 402V405"/>
<path d="M587.5 402V405"/>
<path d="M622.5 402V405"/>
<path d="M658.5 402V405"/>
<path d="M694.5 402V405"/>
<path d="M729.5 402V405"/>
<path d="M765.5 402V405"/>
<path d="M800.5 402V405"/>
<path d="M836.5 402V405"/>
<path d="M871.5 402V405"/>
</g>
<rect x="887" y="65" width="47" height="21" fill="#ffffff" shape-rendering="crispEdges"/>
<text x="895" y="79.5" font-family="Liberation Sans, sans-serif" font-size="10.6px" fill="#3f4850" textLength="31.5" lengthAdjust="spacingAndGlyphs">1.2541</text>
<path d="M14 296.5H886" stroke="#b43030" stroke-opacity="0.85" stroke-dasharray="3 3" shape-rendering="crispEdges"/>
<g shape-rendering="crispEdges" fill="#d42222">
<rect x="17" y="291" width="1" height="5"/>
<rect x="23" y="291" width="1" height="5"/>
<rect x="29" y="292" width="1" height="4"/>
<rect x="35" y="294" width="1" height="2"/>
<rect x="41" y="296" width="1" height="1"/>
<rect x="47" y="296" width="1" height="3"/>
<rect x="53" y="296" width="1" height="5"/>
<rect x="59" y="296" width="1" height="7"/>
<rect x="65" y="296" width="1" height="8"/>
<rect x="71" y="296" width="1" height="8"/>
<rect x="77" y="296" width="1" height="8"/>
<rect x="83" y="296" width="1" height="7"/>
<rect x="89" y="296" width="1" height="6"/>
<rect x="94" y="296" width="1" height="6"/>
<rect x="100" y="296" width="1" height="5"/>
<rect x="106" y="296" width="1" height="4"/>
<rect x="112" y="296" width="1" height="4"/>
<rect x="118" y="296" width="1" height="4"/>
<rect x="124" y="296" width="1" height="4"/>
<rect x="130" y="296" width="1" height="4"/>
<rect x="136" y="296" width="1" height="5"/>
<rect x="142" y="296" width="1" height="6"/>
<rect x="148" y="296" width="1" height="7"/>
<rect x="154" y="296" width="1" height="7"/>
<rect x="160" y="296" width="1" height="7"/>
<rect x="166" y="296" width="1" height="7"/>
<rect x="172" y="296" width="1" height="5"/>
<rect x="178" y="296" width="1" height="4"/>
<rect x="183" y="296" width="1" height="4"/>
<rect x="189" y="296" width="1" height="3"/>
<rect x="195" y="296" width="1" height="2"/>
<rect x="201" y="296" width="1" height="1"/>
<rect x="207" y="295" width="1" height="2"/>
<rect x="213" y="294" width="1" height="3"/>
<rect x="219" y="293" width="1" height="3"/>
<rect x="225" y="292" width="1" height="4"/>
<rect x="231" y="292" width="1" height="4"/>
<rect x="237" y="293" width="1" height="3"/>
<rect x="243" y="294" width="1" height="2"/>
<rect x="249" y="296" width="1" height="1"/>
<rect x="255" y="296" width="1" height="2"/>
<rect x="261" y="296" width="1" height="3"/>
<rect x="266" y="296" width="1" height="4"/>
<rect x="272" y="296" width="1" height="3"/>
<rect x="278" y="296" width="1" height="2"/>
<rect x="284" y="296" width="1" height="2"/>
<rect x="290" y="296" width="1" height="3"/>
<rect x="296" y="296" width="1" height="3"/>
<rect x="302" y="296" width="1" height="4"/>
<rect x="308" y="296" width="1" height="4"/>
<rect x="314" y="296" width="1" height="4"/>
<rect x="320" y="296" width="1" height="3"/>
<rect x="326" y="296" width="1" height="2"/>
<rect x="332" y="296" width="1" height="3"/>
<rect x="338" y="296" width="1" height="4"/>
<rect x="344" y="296" width="1" height="4"/>
<rect x="349" y="296" width="1" height="4"/>
<rect x="355" y="296" width="1" height="5"/>
<rect x="361" y="296" width="1" height="4"/>
<rect x="367" y="296" width="1" height="3"/>
<rect x="373" y="296" width="1" height="2"/>
<rect x="379" y="296" width="1" height="1"/>
<rect x="385" y="296" width="1" height="1"/>
<rect x="391" y="296" width="1" height="1"/>
<rect x="397" y="296" width="1" height="2"/>
<rect x="403" y="296" width="1" height="4"/>
<rect x="409" y="296" width="1" height="5"/>
<rect x="415" y="296" width="1" height="5"/>
<rect x="421" y="296" width="1" height="4"/>
<rect x="427" y="296" width="1" height="3"/>
<rect x="432" y="296" width="1" height="1"/>
<rect x="438" y="294" width="1" height="3"/>
<rect x="444" y="292" width="1" height="5"/>
<rect x="450" y="290" width="1" height="6"/>
<rect x="456" y="289" width="1" height="7"/>
<rect x="462" y="289" width="1" height="7"/>
<rect x="468" y="290" width="1" height="7"/>
<rect x="474" y="290" width="1" height="6"/>
<rect x="480" y="289" width="1" height="7"/>
<rect x="486" y="290" width="1" height="7"/>
<rect x="492" y="291" width="1" height="6"/>
<rect x="498" y="292" width="1" height="4"/>
<rect x="504" y="293" width="1" height="3"/>
<rect x="510" y="294" width="1" height="2"/>
<rect x="516" y="295" width="1" height="2"/>
<rect x="521" y="296" width="1" height="1"/>
<rect x="527" y="296" width="1" height="1"/>
<rect x="533" y="296" width="1" height="1"/>
<rect x="539" y="296" width="1" height="1"/>
<rect x="545" y="296" width="1" height="1"/>
<rect x="551" y="296" width="1" height="1"/>
<rect x="557" y="296" width="1" height="1"/>
<rect x="563" y="296" width="1" height="2"/>
<rect x="569" y="296" width="1" height="3"/>
<rect x="575" y="296" width="1" height="3"/>
<rect x="581" y="296" width="1" height="4"/>
<rect x="587" y="296" width="1" height="3"/>
<rect x="593" y="296" width="1" height="3"/>
<rect x="599" y="296" width="1" height="3"/>
<rect x="604" y="296" width="1" height="2"/>
<rect x="610" y="296" width="1" height="2"/>
<rect x="616" y="296" width="1" height="2"/>
<rect x="622" y="296" width="1" height="1"/>
<rect x="628" y="295" width="1" height="1"/>
<rect x="634" y="293" width="1" height="4"/>
<rect x="640" y="291" width="1" height="6"/>
<rect x="646" y="289" width="1" height="7"/>
<rect x="652" y="289" width="1" height="7"/>
<rect x="658" y="289" width="1" height="7"/>
<rect x="664" y="291" width="1" height="6"/>
<rect x="670" y="292" width="1" height="5"/>
<rect x="676" y="294" width="1" height="2"/>
<rect x="682" y="296" width="1" height="1"/>
<rect x="687" y="296" width="1" height="2"/>
<rect x="693" y="296" width="1" height="2"/>
<rect x="699" y="296" width="1" height="2"/>
<rect x="705" y="296" width="1" height="3"/>
<rect x="711" y="296" width="1" height="2"/>
<rect x="717" y="296" width="1" height="2"/>
<rect x="723" y="296" width="1" height="1"/>
<rect x="729" y="296" width="1" height="1"/>
<rect x="735" y="295" width="1" height="1"/>
<rect x="741" y="295" width="1" height="1"/>
<rect x="747" y="296" width="1" height="1"/>
<rect x="753" y="296" width="1" height="1"/>
<rect x="759" y="296" width="1" height="1"/>
<rect x="765" y="295" width="1" height="1"/>
<rect x="771" y="295" width="1" height="2"/>
<rect x="776" y="294" width="1" height="2"/>
<rect x="782" y="294" width="1" height="3"/>
<rect x="788" y="292" width="1" height="4"/>
<rect x="794" y="291" width="1" height="5"/>
<rect x="800" y="290" width="1" height="7"/>
<rect x="806" y="290" width="1" height="6"/>
<rect x="812" y="290" width="1" height="7"/>
<rect x="818" y="289" width="1" height="7"/>
<rect x="824" y="290" width="1" height="6"/>
<rect x="830" y="290" width="1" height="6"/>
<rect x="836" y="291" width="1" height="6"/>
<rect x="842" y="293" width="1" height="4"/>
<rect x="848" y="293" width="1" height="3"/>
<rect x="854" y="294" width="1" height="2"/>
<rect x="859" y="295" width="1" height="2"/>
<rect x="865" y="296" width="1" height="1"/>
<rect x="871" y="296" width="1" height="2"/>
<rect x="877" y="296" width="1" height="5"/>
</g>
<polyline points="13.2,280.9 22.6,278.8 30.9,278.8 41.3,281.3 53.8,288.2 66.3,293.4 76.8,296.5 95.5,297.6 120.5,299.7 133.0,301.3 149.7,305.9 164.2,310.1 185.1,310.1 195.5,307.6 208.0,304.9 224.7,300.7 237.2,298.6 240.0,298.6 250.4,302.2 267.1,305.5 283.8,304.9 298.3,308.0 312.9,310.1 327.5,309.0 340.0,312.6 356.7,315.3 369.2,314.2 392.1,312.6 404.6,317.4 417.1,319.5 427.5,317.4 437.9,312.2 448.3,307.0 460.8,302.2 472.0,299.7 480.3,296.5 490.8,294.5 511.6,294.5 522.0,295.9 555.3,295.9 567.8,299.2 580.3,301.1 617.8,301.1 628.2,298.6 636.6,293.0 647.0,287.6 659.5,284.7 669.9,284.7 680.3,287.2 692.8,289.7 704.0,290.9 714.4,291.3 731.1,288.2 760.2,287.2 772.8,284.0 783.2,282.6 797.8,275.1 820.7,268.4 835.2,266.3 849.8,266.3 862.3,267.4 870.7,269.5 876.9,272.6" fill="none" stroke="#10108a" stroke-width="1.3" stroke-linejoin="round" />
<g fill="#e02626">
<circle cx="17.5" cy="284.7" r="1.5"/>
<circle cx="23.5" cy="283.6" r="1.5"/>
<circle cx="29.5" cy="282.7" r="1.5"/>
<circle cx="35.5" cy="281.4" r="1.5"/>
<circle cx="41.5" cy="281.3" r="1.5"/>
<circle cx="47.5" cy="281.9" r="1.5"/>
<circle cx="53.5" cy="282.9" r="1.5"/>
<circle cx="59.5" cy="283.9" r="1.5"/>
<circle cx="65.5" cy="284.9" r="1.5"/>
<circle cx="71.5" cy="286.8" r="1.5"/>
<circle cx="77.5" cy="288.6" r="1.5"/>
<circle cx="83.5" cy="290.2" r="1.5"/>
<circle cx="89.5" cy="291.3" r="1.5"/>
<circle cx="94.5" cy="292.2" r="1.5"/>
<circle cx="100.5" cy="293.2" r="1.5"/>
<circle cx="106.5" cy="294.8" r="1.5"/>
<circle cx="112.5" cy="295.8" r="1.5"/>
<circle cx="118.5" cy="296.1" r="1.5"/>
<circle cx="124.5" cy="296.7" r="1.5"/>
<circle cx="130.5" cy="297.1" r="1.5"/>
<circle cx="136.5" cy="297.2" r="1.5"/>
<circle cx="142.5" cy="297.9" r="1.5"/>
<circle cx="148.5" cy="299.3" r="1.5"/>
<circle cx="154.5" cy="301.0" r="1.5"/>
<circle cx="160.5" cy="302.2" r="1.5"/>
<circle cx="166.5" cy="303.8" r="1.5"/>
<circle cx="172.5" cy="305.2" r="1.5"/>
<circle cx="178.5" cy="306.2" r="1.5"/>
<circle cx="183.5" cy="306.5" r="1.5"/>
<circle cx="189.5" cy="306.5" r="1.5"/>
<circle cx="195.5" cy="306.5" r="1.5"/>
<circle cx="201.5" cy="306.4" r="1.5"/>
<circle cx="207.5" cy="306.3" r="1.5"/>
<circle cx="213.5" cy="305.7" r="1.5"/>
<circle cx="219.5" cy="305.0" r="1.5"/>
<circle cx="225.5" cy="304.4" r="1.5"/>
<circle cx="231.5" cy="303.6" r="1.5"/>
<circle cx="237.5" cy="301.6" r="1.5"/>
<circle cx="243.5" cy="301.2" r="1.5"/>
<circle cx="249.5" cy="301.3" r="1.5"/>
<circle cx="255.5" cy="301.3" r="1.5"/>
<circle cx="261.5" cy="301.4" r="1.5"/>
<circle cx="266.5" cy="302.0" r="1.5"/>
<circle cx="272.5" cy="302.7" r="1.5"/>
<circle cx="278.5" cy="303.3" r="1.5"/>
<circle cx="284.5" cy="303.6" r="1.5"/>
<circle cx="290.5" cy="303.8" r="1.5"/>
<circle cx="296.5" cy="304.6" r="1.5"/>
<circle cx="302.5" cy="305.4" r="1.5"/>
<circle cx="308.5" cy="306.0" r="1.5"/>
<circle cx="314.5" cy="306.5" r="1.5"/>
<circle cx="320.5" cy="307.0" r="1.5"/>
<circle cx="326.5" cy="307.5" r="1.5"/>
<circle cx="332.5" cy="307.9" r="1.5"/>
<circle cx="338.5" cy="308.3" r="1.5"/>
<circle cx="344.5" cy="309.3" r="1.5"/>
<circle cx="349.5" cy="310.2" r="1.5"/>
<circle cx="355.5" cy="311.0" r="1.5"/>
<circle cx="361.5" cy="311.6" r="1.5"/>
<circle cx="367.5" cy="312.4" r="1.5"/>
<circle cx="373.5" cy="312.6" r="1.5"/>
<circle cx="379.5" cy="312.6" r="1.5"/>
<circle cx="385.5" cy="312.6" r="1.5"/>
<circle cx="391.5" cy="312.6" r="1.5"/>
<circle cx="397.5" cy="313.0" r="1.5"/>
<circle cx="403.5" cy="313.5" r="1.5"/>
<circle cx="409.5" cy="314.0" r="1.5"/>
<circle cx="415.5" cy="314.5" r="1.5"/>
<circle cx="421.5" cy="315.1" r="1.5"/>
<circle cx="427.5" cy="315.3" r="1.5"/>
<circle cx="432.5" cy="315.3" r="1.5"/>
<circle cx="438.5" cy="314.4" r="1.5"/>
<circle cx="444.5" cy="313.4" r="1.5"/>
<circle cx="450.5" cy="312.1" r="1.5"/>
<circle cx="456.5" cy="310.7" r="1.5"/>
<circle cx="462.5" cy="308.7" r="1.5"/>
<circle cx="468.5" cy="306.7" r="1.5"/>
<circle cx="474.5" cy="304.6" r="1.5"/>
<circle cx="480.5" cy="303.5" r="1.5"/>
<circle cx="486.5" cy="301.7" r="1.5"/>
<circle cx="492.5" cy="299.5" r="1.5"/>
<circle cx="498.5" cy="298.2" r="1.5"/>
<circle cx="504.5" cy="297.1" r="1.5"/>
<circle cx="510.5" cy="296.3" r="1.5"/>
<circle cx="516.5" cy="296.1" r="1.5"/>
<circle cx="521.5" cy="296.1" r="1.5"/>
<circle cx="527.5" cy="295.6" r="1.5"/>
<circle cx="533.5" cy="295.5" r="1.5"/>
<circle cx="539.5" cy="295.5" r="1.5"/>
<circle cx="545.5" cy="295.5" r="1.5"/>
<circle cx="551.5" cy="295.5" r="1.5"/>
<circle cx="557.5" cy="295.5" r="1.5"/>
<circle cx="563.5" cy="296.2" r="1.5"/>
<circle cx="569.5" cy="296.9" r="1.5"/>
<circle cx="575.5" cy="297.5" r="1.5"/>
<circle cx="581.5" cy="297.8" r="1.5"/>
<circle cx="587.5" cy="298.2" r="1.5"/>
<circle cx="593.5" cy="298.6" r="1.5"/>
<circle cx="599.5" cy="299.0" r="1.5"/>
<circle cx="604.5" cy="299.2" r="1.5"/>
<circle cx="610.5" cy="299.4" r="1.5"/>
<circle cx="616.5" cy="299.6" r="1.5"/>
<circle cx="622.5" cy="299.7" r="1.5"/>
<circle cx="628.5" cy="299.3" r="1.5"/>
<circle cx="634.5" cy="298.2" r="1.5"/>
<circle cx="640.5" cy="296.4" r="1.5"/>
<circle cx="646.5" cy="294.7" r="1.5"/>
<circle cx="652.5" cy="293.2" r="1.5"/>
<circle cx="658.5" cy="291.6" r="1.5"/>
<circle cx="664.5" cy="289.9" r="1.5"/>
<circle cx="670.5" cy="288.8" r="1.5"/>
<circle cx="676.5" cy="287.8" r="1.5"/>
<circle cx="682.5" cy="287.2" r="1.5"/>
<circle cx="687.5" cy="287.5" r="1.5"/>
<circle cx="693.5" cy="288.0" r="1.5"/>
<circle cx="699.5" cy="288.5" r="1.5"/>
<circle cx="705.5" cy="288.8" r="1.5"/>
<circle cx="711.5" cy="289.5" r="1.5"/>
<circle cx="717.5" cy="289.7" r="1.5"/>
<circle cx="723.5" cy="289.3" r="1.5"/>
<circle cx="729.5" cy="288.9" r="1.5"/>
<circle cx="735.5" cy="288.6" r="1.5"/>
<circle cx="741.5" cy="288.6" r="1.5"/>
<circle cx="747.5" cy="287.9" r="1.5"/>
<circle cx="753.5" cy="287.8" r="1.5"/>
<circle cx="759.5" cy="287.6" r="1.5"/>
<circle cx="765.5" cy="286.9" r="1.5"/>
<circle cx="771.5" cy="285.8" r="1.5"/>
<circle cx="776.5" cy="285.5" r="1.5"/>
<circle cx="782.5" cy="284.8" r="1.5"/>
<circle cx="788.5" cy="283.6" r="1.5"/>
<circle cx="794.5" cy="281.9" r="1.5"/>
<circle cx="800.5" cy="280.7" r="1.5"/>
<circle cx="806.5" cy="278.7" r="1.5"/>
<circle cx="812.5" cy="277.0" r="1.5"/>
<circle cx="818.5" cy="275.8" r="1.5"/>
<circle cx="824.5" cy="273.9" r="1.5"/>
<circle cx="830.5" cy="272.7" r="1.5"/>
<circle cx="836.5" cy="271.7" r="1.5"/>
<circle cx="842.5" cy="269.7" r="1.5"/>
<circle cx="848.5" cy="269.1" r="1.5"/>
<circle cx="854.5" cy="268.5" r="1.5"/>
<circle cx="859.5" cy="268.4" r="1.5"/>
<circle cx="865.5" cy="267.6" r="1.5"/>
<circle cx="871.5" cy="267.9" r="1.5"/>
<circle cx="877.5" cy="268.4" r="1.5"/>
</g>
<text x="15" y="275" font-family="Liberation Sans, sans-serif" font-size="10.5px" fill="#0a0a8c" textLength="29" lengthAdjust="spacingAndGlyphs">MACD</text>
<polygon points="14,401 13.2,342.4 17.4,347.2 22.6,346.5 27.8,348.0 35.1,355.9 42.4,362.2 52.8,374.0 60.1,374.7 70.5,378.4 78.8,375.7 88.2,368.4 94.5,368.4 100.7,375.1 107.0,369.5 117.4,374.2 128.8,373.2 136.8,387.2 142.4,383.6 149.7,388.2 157.0,392.4 162.2,393.4 166.3,391.3 172.6,381.3 177.8,383.6 189.2,378.4 195.5,369.5 200.7,371.5 207.0,368.4 213.2,373.6 219.5,361.5 225.7,366.3 232.0,361.1 237.2,360.1 240.0,365.3 242.4,373.6 249.4,386.1 255.6,375.7 266.0,380.9 271.2,378.4 278.5,378.4 284.4,369.5 291.0,382.0 296.2,385.1 302.5,383.0 314.0,380.9 320.2,371.5 326.5,385.1 331.7,383.0 337.9,383.6 344.2,387.6 354.6,390.3 361.9,385.1 367.5,377.2 373.3,378.8 383.8,380.9 390.0,385.1 390.4,385.6 393.0,389.0 395.6,392.7 398.0,395.0 403.0,397.0 409.2,398.6 415.0,396.5 421.7,394.2 422.3,392.7 423.5,387.0 425.8,380.4 427.9,376.8 440.0,369.5 445.2,364.2 450.4,367.4 456.7,358.4 462.9,359.7 473.3,358.4 480.3,354.9 491.8,361.1 498.0,358.0 504.3,366.8 510.5,363.8 521.0,373.6 527.2,367.4 538.7,364.9 546.0,368.4 551.2,365.7 557.4,372.6 563.7,381.3 568.9,383.0 575.1,383.6 581.4,376.8 586.6,376.1 593.9,378.8 605.3,376.1 616.8,373.6 623.0,361.1 628.2,360.1 633.5,340.9 635.1,336.1 640.8,330.9 644.9,334.7 650.1,335.5 656.4,339.2 659.5,341.3 669.9,349.7 677.2,363.2 682.4,370.5 687.6,364.2 692.8,362.8 700.1,367.4 706.4,366.3 707.1,365.9 717.5,346.5 723.8,352.8 729.0,352.8 735.2,347.6 741.5,362.2 747.3,350.3 753.4,360.1 759.2,352.8 764.4,350.1 770.7,349.2 776.9,346.5 782.8,348.6 787.3,340.9 789.4,338.2 800.2,332.6 804.0,338.2 806.1,343.0 812.3,334.7 817.5,335.7 824.8,339.2 831.1,338.2 837.3,332.6 847.8,340.3 853.0,341.3 859.2,338.2 863.4,341.3 866.5,344.5 871.7,352.8 876.9,352.8 877,401" fill="url(#rsig)" clip-path="url(#c3)"/>
<g stroke="#6c7883" stroke-width="1" stroke-dasharray="3 3" shape-rendering="crispEdges" fill="none" opacity="0.8">
<path d="M53.5 329V401"/>
<path d="M88.5 329V401"/>
<path d="M124.5 329V401"/>
<path d="M160.5 329V401"/>
<path d="M195.5 329V401"/>
<path d="M231.5 329V401"/>
<path d="M266.5 329V401"/>
<path d="M302.5 329V401"/>
<path d="M338.5 329V401"/>
<path d="M373.5 329V401"/>
<path d="M409.5 329V401"/>
<path d="M444.5 329V401"/>
<path d="M480.5 329V401"/>
<path d="M516.5 329V401"/>
<path d="M551.5 329V401"/>
<path d="M587.5 329V401"/>
<path d="M622.5 329V401"/>
<path d="M658.5 329V401"/>
<path d="M694.5 329V401"/>
<path d="M729.5 329V401"/>
<path d="M800.5 329V401"/>
<path d="M836.5 329V401"/>
<path d="M871.5 329V401"/>
<path d="M14 353.5H886"/>
<path d="M14 380.5H886"/>
</g>
<path d="M765.5 329V401" stroke="#7f8e9c" shape-rendering="crispEdges"/>
<rect x="31" y="340" width="846" height="2" fill="#161698"/>
<rect x="14" y="392" width="863" height="2" fill="#161698"/>
<polyline points="13.2,342.4 17.4,347.2 22.6,346.5 27.8,348.0 35.1,355.9 42.4,362.2 52.8,374.0 60.1,374.7 70.5,378.4 78.8,375.7 88.2,368.4 94.5,368.4 100.7,375.1 107.0,369.5 117.4,374.2 128.8,373.2 136.8,387.2 142.4,383.6 149.7,388.2 157.0,392.4" fill="none" stroke="#f08a2c" stroke-width="1.05" stroke-linejoin="round"/>
<polyline points="157.0,392.4 162.2,393.4" fill="none" stroke="#22c822" stroke-width="1.05" stroke-linejoin="round"/>
<polyline points="162.2,393.4 166.3,391.3 172.6,381.3 177.8,383.6 189.2,378.4 195.5,369.5 200.7,371.5 207.0,368.4 213.2,373.6 219.5,361.5 225.7,366.3 232.0,361.1 237.2,360.1 240.0,365.3 242.4,373.6 249.4,386.1 255.6,375.7 266.0,380.9 271.2,378.4 278.5,378.4 284.4,369.5 291.0,382.0 296.2,385.1 302.5,383.0 314.0,380.9 320.2,371.5 326.5,385.1 331.7,383.0 337.9,383.6 344.2,387.6 354.6,390.3 361.9,385.1 367.5,377.2 373.3,378.8 383.8,380.9 390.0,385.1 390.4,385.6 393.0,389.0" fill="none" stroke="#f08a2c" stroke-width="1.05" stroke-linejoin="round"/>
<polyline points="393.0,389.0 398.0,395.0 403.0,397.0 409.2,398.6 415.0,396.5 421.7,394.2" fill="none" stroke="#22c822" stroke-width="1.05" stroke-linejoin="round"/>
<polyline points="421.7,394.2 423.5,387.0 425.8,380.4 427.9,376.8 440.0,369.5 445.2,364.2 450.4,367.4 456.7,358.4 462.9,359.7 473.3,358.4 480.3,354.9 491.8,361.1 498.0,358.0 504.3,366.8 510.5,363.8 521.0,373.6 527.2,367.4 538.7,364.9 546.0,368.4 551.2,365.7 557.4,372.6 563.7,381.3 568.9,383.0 575.1,383.6 581.4,376.8 586.6,376.1 593.9,378.8 605.3,376.1 616.8,373.6 623.0,361.1 628.2,360.1" fill="none" stroke="#f08a2c" stroke-width="1.05" stroke-linejoin="round"/>
<polyline points="628.2,360.1 635.1,336.1 640.8,330.9 644.9,334.7 650.1,335.5 656.4,339.2" fill="none" stroke="#cc40cc" stroke-width="1.05" stroke-linejoin="round"/>
<polyline points="656.4,339.2 669.9,349.7 677.2,363.2 682.4,370.5 687.6,364.2 692.8,362.8 700.1,367.4 706.4,366.3 707.1,365.9 717.5,346.5 723.8,352.8 729.0,352.8 735.2,347.6 741.5,362.2 747.3,350.3 753.4,360.1 759.2,352.8 764.4,350.1 770.7,349.2 776.9,346.5 782.8,348.6" fill="none" stroke="#f08a2c" stroke-width="1.05" stroke-linejoin="round"/>
<polyline points="782.8,348.6 789.4,338.2 800.2,332.6 804.0,338.2" fill="none" stroke="#cc40cc" stroke-width="1.05" stroke-linejoin="round"/>
<polyline points="804.0,338.2 806.1,343.0" fill="none" stroke="#f08a2c" stroke-width="1.05" stroke-linejoin="round"/>
<polyline points="806.1,343.0 812.3,334.7 817.5,335.7 824.8,339.2 831.1,338.2 837.3,332.6 847.8,340.3" fill="none" stroke="#cc40cc" stroke-width="1.05" stroke-linejoin="round"/>
<polyline points="847.8,340.3 853.0,341.3" fill="none" stroke="#f08a2c" stroke-width="1.05" stroke-linejoin="round"/>
<polyline points="853.0,341.3 859.2,338.2" fill="none" stroke="#cc40cc" stroke-width="1.05" stroke-linejoin="round"/>
<polyline points="859.2,338.2 863.4,341.3 866.5,344.5 871.7,352.8 876.9,352.8" fill="none" stroke="#f08a2c" stroke-width="1.05" stroke-linejoin="round"/>
<text x="15" y="340" font-family="Liberation Sans, sans-serif" font-size="10.5px" fill="#f08a2c" textLength="16" lengthAdjust="spacingAndGlyphs">RSI</text>
<rect x="13.5" y="37.5" width="873" height="220" fill="none" stroke="#b2c4d4" shape-rendering="crispEdges"/>
<rect x="13.5" y="263.5" width="873" height="59" fill="none" stroke="#b2c4d4" shape-rendering="crispEdges"/>
<rect x="13.5" y="328.5" width="873" height="73" fill="none" stroke="#b2c4d4" shape-rendering="crispEdges"/>
<rect x="13" y="378" width="2" height="27" fill="#dcebf2" shape-rendering="crispEdges"/>
<path d="M13.5 380V379.5Q13.5 378.5 15 378.5H75Q76.5 378.5 76.5 380V395L74.5 397H13.5Z" fill="#667a8e" stroke="#b9cad6"/>
<text x="22" y="391.6" font-family="Liberation Sans, sans-serif" font-size="10.6px" fill="#ffffff" stroke="#fff" stroke-width="0.25" textLength="48" lengthAdjust="spacingAndGlyphs">Май 2020</text>
<rect x="765" y="378" width="2" height="27" fill="#dcebf2" shape-rendering="crispEdges"/>
<path d="M765.5 380V379.5Q765.5 378.5 767 378.5H833Q834.5 378.5 834.5 380V395L832.5 397H765.5Z" fill="#667a8e" stroke="#b9cad6"/>
<text x="774" y="391.6" font-family="Liberation Sans, sans-serif" font-size="10.6px" fill="#ffffff" stroke="#fff" stroke-width="0.25" textLength="55" lengthAdjust="spacingAndGlyphs">Июнь 2020</text>
</svg>
</body></html>
